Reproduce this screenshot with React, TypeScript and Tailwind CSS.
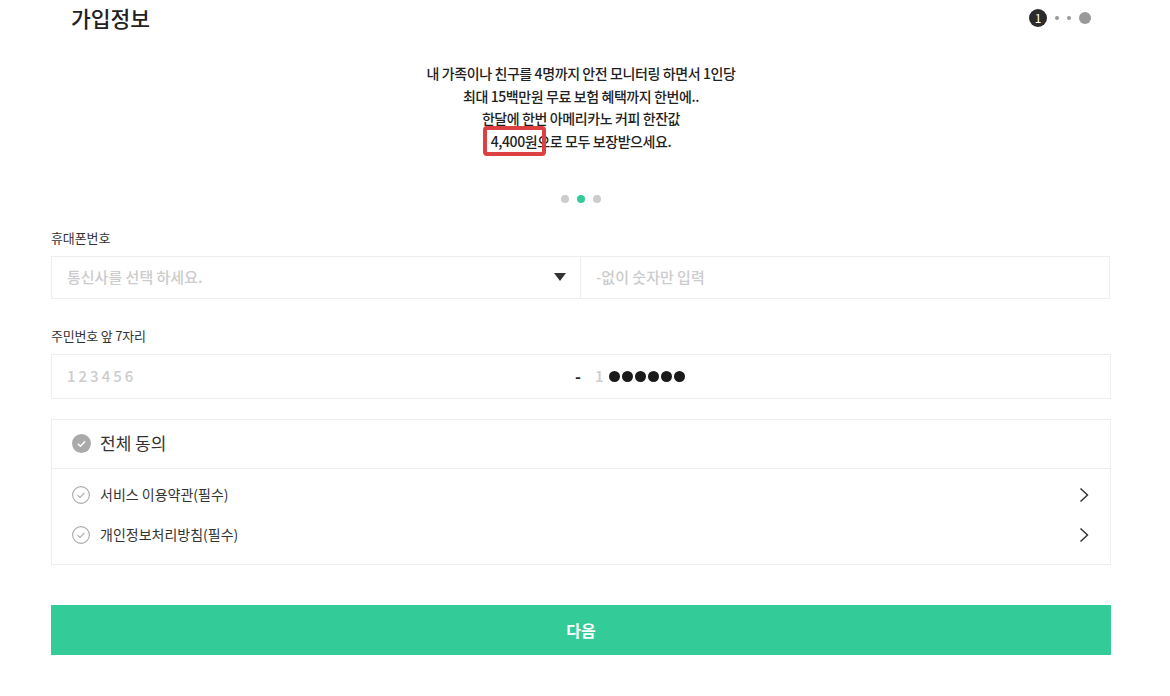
import React from "react";

function SmallCheck() {
  return (
    <svg width="18" height="18" viewBox="0 0 18 18" fill="none" className="shrink-0">
      <circle cx="9" cy="9" r="8.4" stroke="#aaaaaa" strokeWidth="1.1" />
      <path d="M5.6 9.2 L8 11.5 L12.4 6.8" stroke="#aaaaaa" strokeWidth="1.1" />
    </svg>
  );
}

function Chevron() {
  return (
    <svg width="10" height="16" viewBox="0 0 10 16" fill="none">
      <path d="M1.5 1.5 L8.5 8 L1.5 14.5" stroke="#333333" strokeWidth="1.5" />
    </svg>
  );
}

function Row({ label }: { label: string }) {
  return (
    <div className="flex h-10 items-center justify-between pl-[20px] pr-[21px]">
      <div className="flex items-center gap-[10px]">
        <SmallCheck />
        <span className="text-[14px] text-[#333333]">{label}</span>
      </div>
      <Chevron />
    </div>
  );
}

export default function App() {
  return (
    <div
      className="h-[696px] w-[1170px] overflow-hidden bg-white text-[#222222]"
      style={{ fontFamily: '"Noto Sans CJK KR", "Noto Sans", sans-serif' }}
    >
      <div className="flex h-9 items-center justify-between pl-[71px] pr-[79px]">
        <h1 className="text-[21.5px] font-medium leading-9 text-[#222222]">가입정보</h1>
        <div className="flex items-center">
          <span className="flex h-[18px] w-[18px] items-center justify-center rounded-full bg-[#2b2b2b] text-[12px] text-white">
            1
          </span>
          <span className="ml-[8px] h-1 w-1 rounded-full bg-[#999999]" />
          <span className="ml-[8px] h-1 w-1 rounded-full bg-[#999999]" />
          <span className="ml-[8px] h-3 w-3 rounded-full bg-[#999999]" />
        </div>
      </div>

      <div className="mx-[51px] w-[1060px]">
        <div className="mt-[26px] text-center text-[14px] font-medium leading-[22.7px] tracking-[-0.4px] text-[#222222]">
          <p>내 가족이나 친구를 4명까지 안전 모니터링 하면서 1인당</p>
          <p>최대 15백만원 무료 보험 혜택까지 한번에..</p>
          <p>한달에 한번 아메리카노 커피 한잔값</p>
          <p>
            <span className="relative inline-block">
              <span className="absolute -left-[8px] -top-[4px] h-[30px] w-[63px] rounded-[4px] border-4 border-[#dc4040]" />
              4,400원
            </span>
            으로 모두 보장받으세요.
          </p>
        </div>

        <div className="mt-[42px] flex justify-center gap-2">
          <span className="h-2 w-2 rounded-full bg-[#cccccc]" />
          <span className="h-2 w-2 rounded-full bg-[#33cc99]" />
          <span className="h-2 w-2 rounded-full bg-[#cccccc]" />
        </div>

        <label className="mt-[22px] block h-[26px] text-[13px] leading-[26px] tracking-[-0.1px] text-[#333333]">휴대폰번호</label>
        <div className="mt-[5px] flex h-[43px] w-[1059px] border border-[#eeeeee]">
          <div className="flex w-[529px] items-center justify-between border-r border-[#eeeeee] pl-[15px] pr-[14px]">
            <span className="text-[15px] font-medium text-[#cccccc]">통신사를 선택 하세요.</span>
            <span className="h-0 w-0 border-x-[6px] border-t-[8px] border-x-transparent border-t-[#333333]" />
          </div>
          <div className="flex flex-1 items-center pl-[15px] text-[15px] font-medium text-[#cccccc]">-없이 숫자만 입력</div>
        </div>

        <label className="mt-[24px] block h-[26px] text-[13px] leading-[26px] tracking-[-0.2px] text-[#333333]">주민번호 앞 7자리</label>
        <div className="mt-[5px] flex h-[45px] items-center border border-[#eeeeee]">
          <div className="flex w-[529px] items-center justify-between pl-[15px]">
            <span className="text-[15px] font-medium tracking-[3px] text-[#cccccc]">123456</span>
            <span className="text-[16px] font-bold text-[#222222]">-</span>
          </div>
          <span className="ml-[14px] text-[15px] font-medium text-[#cccccc]">1</span>
          <div className="ml-[5px] flex gap-[2px]">
            {[0, 1, 2, 3, 4, 5].map((i) => (
              <span key={i} className="h-[11px] w-[11px] rounded-full bg-[#1a1a1a]" />
            ))}
          </div>
        </div>

        <div className="mt-[20px] border border-[#eeeeee] pb-[9px]">
          <div className="flex h-[49px] items-center gap-[9px] border-b border-[#eeeeee] pl-[20px]">
            <svg width="19" height="19" viewBox="0 0 19 19" fill="none" className="shrink-0">
              <circle cx="9.5" cy="9.5" r="9.5" fill="#aaaaaa" />
              <path d="M5.8 9.8 L8.4 12.2 L13.2 7.2" stroke="#ffffff" strokeWidth="1.5" />
            </svg>
            <span className="-translate-y-px text-[17px] text-[#333333]">전체 동의</span>
          </div>
          <div className="pt-[6px]">
            <Row label="서비스 이용약관(필수)" />
            <Row label="개인정보처리방침(필수)" />
          </div>
        </div>

        <button className="mt-[40px] flex h-[50px] w-full items-center justify-center bg-[#33cc99] text-[16px] font-bold text-white">
          다음
        </button>
      </div>
    </div>
  );
}
